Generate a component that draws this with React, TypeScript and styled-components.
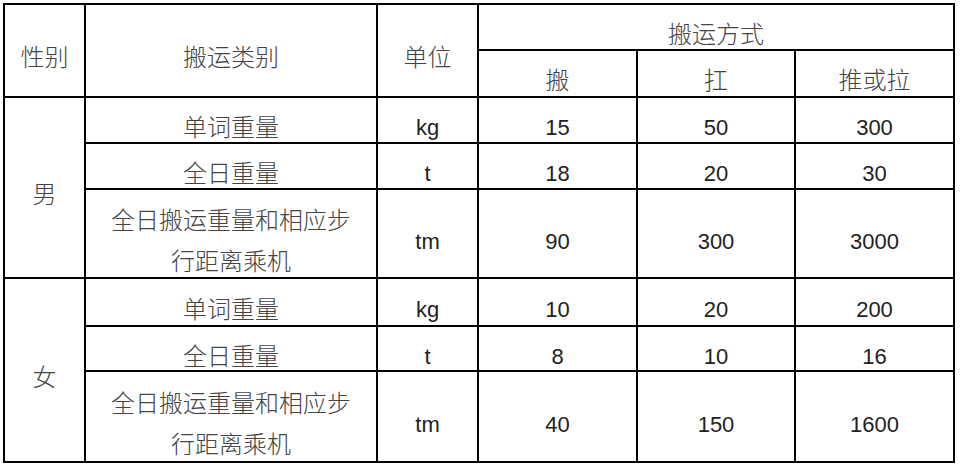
import React from "react"
import styled, { createGlobalStyle } from "styled-components"

const GlobalStyle = createGlobalStyle`
  html, body {
    margin: 0;
    padding: 0;
    background: #fff;
  }
`

type Row = {
  kind: string
  unit: string
  values: [string, string, string]
}

type Group = {
  sex: string
  rows: Row[]
}

const groups: Group[] = [
  {
    sex: "男",
    rows: [
      { kind: "单词重量", unit: "kg", values: ["15", "50", "300"] },
      { kind: "全日重量", unit: "t", values: ["18", "20", "30"] },
      { kind: "全日搬运重量和相应步\n行距离乘机", unit: "tm", values: ["90", "300", "3000"] },
    ],
  },
  {
    sex: "女",
    rows: [
      { kind: "单词重量", unit: "kg", values: ["10", "20", "200"] },
      { kind: "全日重量", unit: "t", values: ["8", "10", "16"] },
      { kind: "全日搬运重量和相应步\n行距离乘机", unit: "tm", values: ["40", "150", "1600"] },
    ],
  },
]

const App: React.FC = () => {
  return (
    <Page>
      <GlobalStyle />
      <Table role="table">
        <Cell $rows={2}>性别</Cell>
        <Cell $rows={2}>搬运类别</Cell>
        <Cell $rows={2}>单位</Cell>
        <Cell $cols={3}>搬运方式</Cell>
        <Cell>搬</Cell>
        <Cell>扛</Cell>
        <Cell>推或拉</Cell>
        {groups.map((g) => (
          <React.Fragment key={g.sex}>
            <Cell $rows={g.rows.length} $col={1}>{g.sex}</Cell>
            {g.rows.map((r, i) => (
              <React.Fragment key={i}>
                <Cell $col={2}>
                  {r.kind.split("\n").map((line, j) => (
                    <Line key={j}>{line}</Line>
                  ))}
                </Cell>
                <Cell $latin>{r.unit}</Cell>
                {r.values.map((v, j) => (
                  <Cell key={j} $latin>{v}</Cell>
                ))}
              </React.Fragment>
            ))}
          </React.Fragment>
        ))}
      </Table>
    </Page>
  )
}

export default App

const rule = "2px solid #000"

const Page = styled.div`
  padding: 3px;
  width: 960px;
  height: 468px;
  box-sizing: border-box;
  background: #fff;
`

const Table = styled.div`
  display: grid;
  grid-template-columns: 81px 292px 101px 159px 158px 159px;
  grid-template-rows: 46px 47px 46px 46px 89px 48px 45px 91px;
  width: max-content;
  border-top: ${rule};
  border-left: ${rule};
`

const Cell = styled.div<{ $latin?: boolean; $rows?: number; $cols?: number; $col?: number }>`
  grid-row: span ${(p) => p.$rows ?? 1};
  grid-column: ${(p) => (p.$col ? `${p.$col} / ` : "")}span ${(p) => p.$cols ?? 1};
  display: flex;
  flex-direction: column;
  align-items: center;
  justify-content: center;
  box-sizing: border-box;
  border-right: ${rule};
  border-bottom: ${rule};
  padding-top: ${(p) => (p.$latin ? "16px" : "11px")};
  color: ${(p) => (p.$latin ? "#222" : "#444")};
  font-family: ${(p) =>
    p.$latin
      ? `"Liberation Sans", Arial, sans-serif`
      : `"Noto Sans CJK SC", "Noto Sans", sans-serif`};
  font-size: ${(p) => (p.$latin ? "22px" : "24px")};
  font-weight: ${(p) => (p.$latin ? 400 : 300)};
  line-height: 24px;
`

const Line = styled.div`
  line-height: 41px;
`
